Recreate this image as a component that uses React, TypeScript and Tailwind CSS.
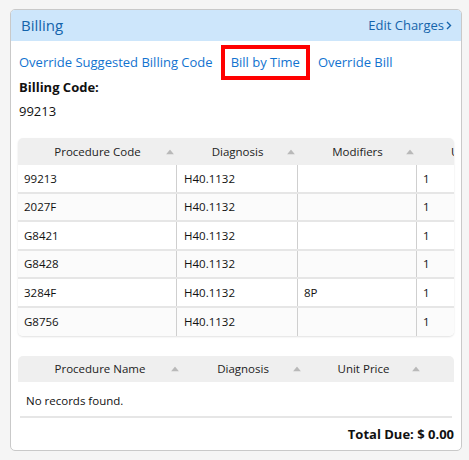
import React from "react";

const rows = [
  { code: "99213", dx: "H40.1132", mod: "", units: "1" },
  { code: "2027F", dx: "H40.1132", mod: "", units: "1" },
  { code: "G8421", dx: "H40.1132", mod: "", units: "1" },
  { code: "G8428", dx: "H40.1132", mod: "", units: "1" },
  { code: "3284F", dx: "H40.1132", mod: "8P", units: "1" },
  { code: "G8756", dx: "H40.1132", mod: "", units: "1" },
];

function SortArrow() {
  return (
    <svg
      width="8"
      height="5"
      viewBox="0 0 8 5"
      className="absolute right-[3px] top-1/2 -translate-y-1/2"
    >
      <path d="M4 0 L8 5 L0 5 Z" fill="#b9b9b9" />
    </svg>
  );
}

function HeadCell({ label, sort = true }: { label: string; sort?: boolean }) {
  return (
    <div className="relative flex items-center justify-center h-full text-[#222]">
      <span>{label}</span>
      {sort && <SortArrow />}
    </div>
  );
}

export default function App() {
  return (
    <div
      className="w-[469px] h-[460px] bg-[#f5f5f5] pt-[9px] pl-[10px]"
      style={{ fontFamily: '"Open Sans", "Liberation Sans", sans-serif' }}
    >
      <div className="w-[452px] h-[442px] bg-white border border-[#c9c9c9] rounded-[5px] overflow-hidden flex flex-col">
        {/* header */}
        <div className="h-[31px] bg-[#cde6fb] flex items-center justify-between pl-[10px] pr-[9px] shrink-0">
          <span className="text-[15px] text-[#1464ab]">Billing</span>
          <span className="text-[13px] text-[#1464ab] flex items-center">
            Edit Charges
            <svg width="6" height="9" viewBox="0 0 6 9" className="ml-[2px]">
              <path d="M1 1 L4.5 4.5 L1 8" fill="none" stroke="#1464ab" strokeWidth="1.4" />
            </svg>
          </span>
        </div>

        <div className="px-[7px] flex flex-col">
          {/* link row */}
          <div className="mt-[4px] h-[35px] flex items-center text-[13px] text-[#1273d0]">
            <span className="ml-[1px] mt-[1px]">Override Suggested Billing Code</span>
            <span className="ml-[8px] h-[35px] border-[4px] border-[#ff0000] flex items-center px-[6px]">
              <span className="mt-[1px]">Bill by Time</span>
            </span>
            <span className="ml-[8px] mt-[1px]">Override Bill</span>
          </div>

          <div className="mt-[-1px] ml-[1px] leading-[16px] text-[13px] font-bold text-[#111]">
            Billing Code:
          </div>
          <div className="mt-[8px] ml-[1px] leading-[16px] text-[13px] text-[#111]">99213</div>

          {/* charges table */}
          <div className="mt-[19px] w-[436px] overflow-hidden rounded-[5px] shadow-[0_1px_2px_rgba(0,0,0,0.12)] text-[11.5px]">
            <div className="w-[520px]">
              <div className="h-[27px] bg-[#efefef] grid grid-cols-[159px_121px_119px_96px]">
                <HeadCell label="Procedure Code" />
                <HeadCell label="Diagnosis" />
                <HeadCell label="Modifiers" />
                <HeadCell label="Units" sort={false} />
              </div>
              {rows.map((r, i) => (
                <div
                  key={r.code}
                  className={`h-[28.5px] grid grid-cols-[159px_121px_119px_96px] text-[#111] ${
                    i < rows.length - 1 ? "border-b-2 border-[#e6e6e6]" : ""
                  } ${i % 2 === 1 ? "bg-[#fbfbfb]" : "bg-white"}`}
                >
                  <div className="flex items-center pl-[6px] border-r border-[#cfcfcf]">{r.code}</div>
                  <div className="flex items-center pl-[7px] border-r border-[#cfcfcf]">{r.dx}</div>
                  <div className="flex items-center pl-[6px] border-r border-[#cfcfcf]">{r.mod}</div>
                  <div className="flex items-center pl-[6px]">{r.units}</div>
                </div>
              ))}
            </div>
          </div>

          {/* services table */}
          <div className="mt-[20px] w-[436px] text-[11.5px]">
            <div className="h-[26px] bg-[#efefef] rounded-t-[5px] grid grid-cols-[164px_122px_119px_1fr]">
              <HeadCell label="Procedure Name" />
              <HeadCell label="Diagnosis" />
              <HeadCell label="Unit Price" />
              <div />
            </div>
            <div className="h-[36px] flex items-center pl-[6px] pt-[3px] text-[#111] border-b-2 border-[#e6e6e6] mx-[2px]">
              No records found.
            </div>
          </div>

          <div className="mt-[7px] flex justify-end text-[13px] font-bold text-[#111]">
            Total Due: $ 0.00
          </div>
        </div>
      </div>
    </div>
  );
}
